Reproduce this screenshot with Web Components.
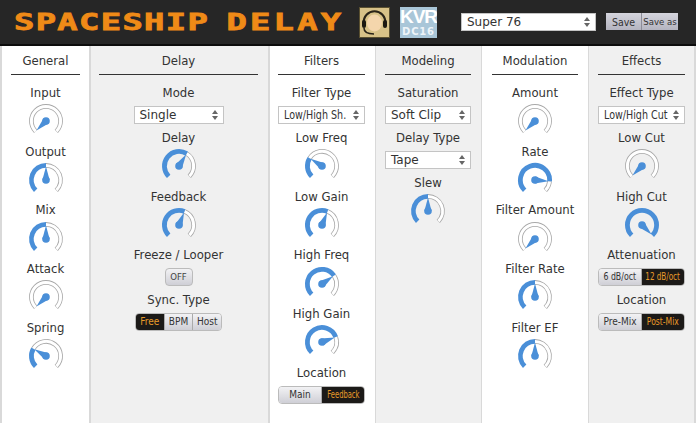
<!DOCTYPE html>
<html>
<head>
<meta charset="utf-8">
<title>Spaceship Delay</title>
<style>
    html, body { margin: 0; height: 100%; overflow: hidden; }
    body { background: #d9d9d9; font-family: "DejaVu Sans", Verdana, sans-serif; font-size: 12px; color: #333; }
</style>
</head>
<body>
<spaceship-app>
    <sd-header slot="header" preset="Super 76"></sd-header>

    <sd-column title="General" style="flex:0 0 87px;margin:0 2px 0 2px">
        <sd-knob label="Input" value="-135"></sd-knob>
        <sd-knob label="Output" value="0"></sd-knob>
        <sd-knob label="Mix" value="0"></sd-knob>
        <sd-knob label="Attack" value="-135"></sd-knob>
        <sd-knob label="Spring" value="-60"></sd-knob>
    </sd-column>

    <sd-column title="Delay" alt style="flex:0 0 177px;margin-right:2px;padding:0 10px 0 8px">
        <sd-field label="Mode"><sd-select style="width:90px">Single</sd-select></sd-field>
        <sd-knob label="Delay" value="32"></sd-knob>
        <sd-knob label="Feedback" value="22"></sd-knob>
        <sd-field label="Freeze / Looper"><sd-button>OFF</sd-button></sd-field>
        <sd-field label="Sync. Type"><sd-toggle style="width:87px" options="Free,BPM,Host" active="Free"></sd-toggle></sd-field>
    </sd-column>

    <sd-column title="Filters" style="flex:0 0 105px;margin-right:1px;padding:0 10px 0 8px">
        <sd-field label="Filter Type"><sd-select narrow>Low/High Sh.</sd-select></sd-field>
        <sd-knob label="Low Freq" value="-58"></sd-knob>
        <sd-knob label="Low Gain" value="22"></sd-knob>
        <sd-knob label="High Freq" value="55"></sd-knob>
        <sd-knob label="High Gain" value="70"></sd-knob>
        <sd-field label="Location"><sd-toggle style="width:87px" options="Main,Feedback:0.75" active="Feedback"></sd-toggle></sd-field>
    </sd-column>

    <sd-column title="Modeling" alt style="flex:0 0 105px;margin-right:1px;padding:0 10px 0 9px">
        <sd-field label="Saturation"><sd-select>Soft Clip</sd-select></sd-field>
        <sd-field label="Delay Type"><sd-select>Tape</sd-select></sd-field>
        <sd-knob label="Slew" value="0"></sd-knob>
    </sd-column>

    <sd-column title="Modulation" style="flex:0 0 106px;margin-right:1px;padding:0 10px">
        <sd-knob label="Amount" value="-135"></sd-knob>
        <sd-knob label="Rate" value="95"></sd-knob>
        <sd-knob label="Filter Amount" value="-135"></sd-knob>
        <sd-knob label="Filter Rate" value="0"></sd-knob>
        <sd-knob label="Filter EF" value="0"></sd-knob>
    </sd-column>

    <sd-column title="Effects" alt style="flex:0 0 105px">
        <sd-field label="Effect Type"><sd-select narrow>Low/High Cut</sd-select></sd-field>
        <sd-knob label="Low Cut" value="-135"></sd-knob>
        <sd-knob label="High Cut" value="135"></sd-knob>
        <sd-field label="Attenuation"><sd-toggle style="width:87px" options="6 dB/oct:0.87,12 dB/oct:0.8" active="12 dB/oct"></sd-toggle></sd-field>
        <sd-field label="Location"><sd-toggle style="width:87px" options="Pre-Mix,Post-Mix:0.85" active="Post-Mix"></sd-toggle></sd-field>
    </sd-column>
</spaceship-app>

<script>
(function() {
    const BLUE = '#4a8fd8';

    // angle in degrees from 12 o'clock, clockwise
    function polar(r, deg) {
        const a = deg * Math.PI / 180;
        return (19 + r * Math.sin(a)).toFixed(2) + ' ' + (19 - r * Math.cos(a)).toFixed(2);
    }

    function arc(r, from, to) {
        const large = (to - from) > 180 ? 1 : 0;
        return `M${polar(r, from)}A${r} ${r} 0 ${large} 1 ${polar(r, to)}`;
    }

    class SpaceshipApp extends HTMLElement {
        constructor() {
            super();
            this.attachShadow({mode: 'open'}).innerHTML = `
                <style>
                    :host { display: flex; flex-direction: column; height: 423px; overflow: hidden; }
                    .columns { flex: 1; display: flex; min-height: 0; }
                </style>
                <slot name="header"></slot>
                <div class="columns"><slot></slot></div>
            `;
        }
    }

    class SdHeader extends HTMLElement {
        constructor() {
            super();
            this.attachShadow({mode: 'open'}).innerHTML = `
                <style>
                    :host { display: flex; align-items: center; height: 44px; box-sizing: content-box;
                            background: #262626; border-bottom: 2px solid #0c0c0c; }
                    .name { flex: 0 0 359px; box-sizing: border-box; padding-left: 14px; white-space: nowrap; overflow: hidden; }
                    .name span { display: inline-block; transform: scaleX(1.47); transform-origin: left center;
                                 font: bold 23px/47px "DejaVu Sans Mono", monospace; letter-spacing: 0.9px; word-spacing: -3px;
                                 color: #ef8a17; -webkit-text-stroke: 0.8px #ef8a17; }
                    .name i { font-style: normal; letter-spacing: 2.2px; }
                    .kvr { flex: 0 0 37px; height: 31px; margin: 0 24px 0 10px; background: #a9c6d8; overflow: hidden;
                           display: flex; flex-direction: column; align-items: center; color: #fff; }
                    .kvr b { font: bold 19px/19px "Liberation Sans", sans-serif; letter-spacing: -1px; }
                    .kvr i { font: bold 10px/11px "DejaVu Sans", sans-serif; letter-spacing: 0.8px; color: #eef4f8; }
                    svg { flex: 0 0 31px; display: block; }
                    sd-select { flex: 0 0 135px; margin-right: 10px; }
                    .save { display: flex; margin-top: -1px; }
                    .save button { height: 17px; padding: 0; border: 0; border-right: 1px solid #8d8d98;
                                   background: linear-gradient(#d4d4dc, #b4b4c0); color: #333;
                                   font: 10px "DejaVu Sans", sans-serif; font-stretch: condensed; }
                    .save button:first-child { width: 36px; font-size: 10.5px; }
                    .save button:last-child { width: 36px; border-right: 0; font-size: 9.5px; }
                </style>
                <div class="name"><span>SPACESHIP <i>DELAY</i></span></div>
                <svg width="31" height="31" viewBox="0 0 31 31">
                    <rect x=".5" y=".5" width="30" height="30" fill="#d8c288" stroke="#5a5030"/>
                    <ellipse cx="15.5" cy="16" rx="7.5" ry="8.5" fill="#f4d6ac"/>
                    <path d="M4.5 17C4 0 27 0 26.5 17" fill="none" stroke="#2a2418" stroke-width="2.2"/>
                    <rect x="3" y="13" width="4" height="8" rx="2" fill="#1c1810"/>
                    <rect x="24" y="13" width="4" height="8" rx="2" fill="#1c1810"/>
                    <path d="M5 21c0 5 4 6 10 6" fill="none" stroke="#2a2418" stroke-width="1.6"/>
                </svg>
                <div class="kvr"><b>KVR</b><i>DC16</i></div>
                <sd-select></sd-select>
                <div class="save"><button>Save</button><button>Save as</button></div>
            `;
            this.shadowRoot.querySelector('sd-select').textContent = this.getAttribute('preset');
        }
    }

    class SdColumn extends HTMLElement {
        constructor() {
            super();
            this.attachShadow({mode: 'open'}).innerHTML = `
                <style>
                    :host { display: flex; flex-direction: column; box-sizing: border-box; min-width: 0; padding: 0 9px;
                            background: #fff; font-size: 11.7px; color: #333; }
                    :host([alt]) { background: #f0f0f0; }
                    h2 { margin: 0 0 8px; height: 29px; box-sizing: border-box; border-bottom: 1px solid #333;
                         font: inherit; line-height: 30px; text-align: center; }
                </style>
                <h2></h2>
                <slot></slot>
            `;
            this.shadowRoot.querySelector('h2').textContent = this.getAttribute('title');
            this.removeAttribute('title');
        }
    }

    class SdKnob extends HTMLElement {
        constructor() {
            super();
            const value = parseFloat(this.getAttribute('value'));
            const tip = polar(13.5, value);
            const a = value * Math.PI / 180;
            const dx = 3.6 * Math.cos(a), dy = 3.6 * Math.sin(a);
            this.attachShadow({mode: 'open'}).innerHTML = `
                <style>
                    :host { display: block; height: 58.7px; text-align: center; }
                    .label { height: 18px; line-height: 20px; white-space: nowrap; }
                    .dial { height: 40.7px; display: flex; align-items: center; justify-content: center; }
                    svg { display: block; }
                </style>
                <div class="label">${this.getAttribute('label')}</div>
                <div class="dial">
                    <svg width="38" height="38" viewBox="0 0 38 38">
                        ${value < 135 ? `
                        <path d="${arc(14.6, value, 135)}" fill="none" stroke="#a8a8a8" stroke-width="4.6"/>
                        <path d="${arc(14.6, value - 0.01, 134)}" fill="none" stroke="#fff" stroke-width="3"/>` : ''}
                        ${value > -135 ? `<path d="${arc(14.6, -135, value)}" fill="none" stroke="${BLUE}" stroke-width="4.8"/>` : ''}
                        <circle cx="19" cy="19" r="3.8" fill="${BLUE}"/>
                        <path d="M${(19 + dx).toFixed(2)} ${(19 + dy).toFixed(2)}L${tip}L${(19 - dx).toFixed(2)} ${(19 - dy).toFixed(2)}z" fill="${BLUE}"/>
                    </svg>
                </div>
            `;
        }
    }

    class SdField extends HTMLElement {
        constructor() {
            super();
            this.attachShadow({mode: 'open'}).innerHTML = `
                <style>
                    :host { display: block; text-align: center; }
                    .label { height: 18px; line-height: 20px; white-space: nowrap; }
                    .body { display: flex; justify-content: center; padding: 5px 0 4px; }
                    ::slotted(*) { flex: 0 0 auto; }
                </style>
                <div class="label">${this.getAttribute('label')}</div>
                <div class="body"><slot></slot></div>
            `;
        }
    }

    class SdSelect extends HTMLElement {
        constructor() {
            super();
            this.attachShadow({mode: 'open'}).innerHTML = `
                <style>
                    :host { display: flex; align-items: center; width: 100%; height: 18px; box-sizing: border-box;
                            padding: 0 5px; background: #fff; border: 1px solid #c4c4c4; color: #333;
                            font: 12px "DejaVu Sans", sans-serif; text-align: left; }
                    :host([narrow]) { font-stretch: condensed; }
                    .text { flex: 1; min-width: 0; white-space: nowrap; }
                    :host([narrow]) .text { transform: scaleX(0.885); transform-origin: left center; }
                    svg { flex: 0 0 6px; display: block; }
                </style>
                <span class="text"><slot></slot></span>
                <svg width="6" height="10" viewBox="0 0 6 10"><path d="M3 0l3 4H0zM3 10L0 6h6z" fill="#666"/></svg>
            `;
        }
    }

    class SdButton extends HTMLElement {
        constructor() {
            super();
            this.attachShadow({mode: 'open'}).innerHTML = `
                <style>
                    :host { display: block; width: 28px; height: 18px; box-sizing: border-box; border: 1px solid #bbb;
                            border-radius: 4px; background: linear-gradient(#f2f2f4, #cfcfd6); color: #444;
                            font: 9.5px/16px "DejaVu Sans", sans-serif; font-stretch: condensed; text-align: center; }
                </style>
                <slot></slot>
            `;
        }
    }

    class SdToggle extends HTMLElement {
        constructor() {
            super();
            const active = this.getAttribute('active');
            // an option is "name" or "name:squeeze" for long captions
            const items = this.getAttribute('options').split(',').map(opt => {
                const [name, squeeze] = opt.split(':');
                return `<span class="${name === active ? 'on' : ''}"><b style="transform:scaleX(${squeeze || 1})">${name}</b></span>`;
            }).join('');
            this.attachShadow({mode: 'open'}).innerHTML = `
                <style>
                    :host { display: flex; height: 18px; box-sizing: border-box; border: 1px solid #bbb; border-radius: 4px;
                            overflow: hidden; font: 10px/16px "DejaVu Sans", sans-serif; font-stretch: condensed; color: #333; }
                    span { flex: 1 1 0; min-width: 0; display: flex; justify-content: center; white-space: nowrap;
                           background: linear-gradient(#f2f2f4, #cfcfd6); }
                    span + span { border-left: 1px solid #aaa; }
                    b { flex: 0 0 auto; font-weight: normal; display: block; }
                    .on { background: #1c1a18; color: #e89a2a; }
                </style>
                ${items}
            `;
        }
    }

    window.customElements.define('spaceship-app', SpaceshipApp);
    window.customElements.define('sd-select', SdSelect);
    window.customElements.define('sd-header', SdHeader);
    window.customElements.define('sd-column', SdColumn);
    window.customElements.define('sd-knob', SdKnob);
    window.customElements.define('sd-field', SdField);
    window.customElements.define('sd-button', SdButton);
    window.customElements.define('sd-toggle', SdToggle);
})();
</script>
</body>
</html>
